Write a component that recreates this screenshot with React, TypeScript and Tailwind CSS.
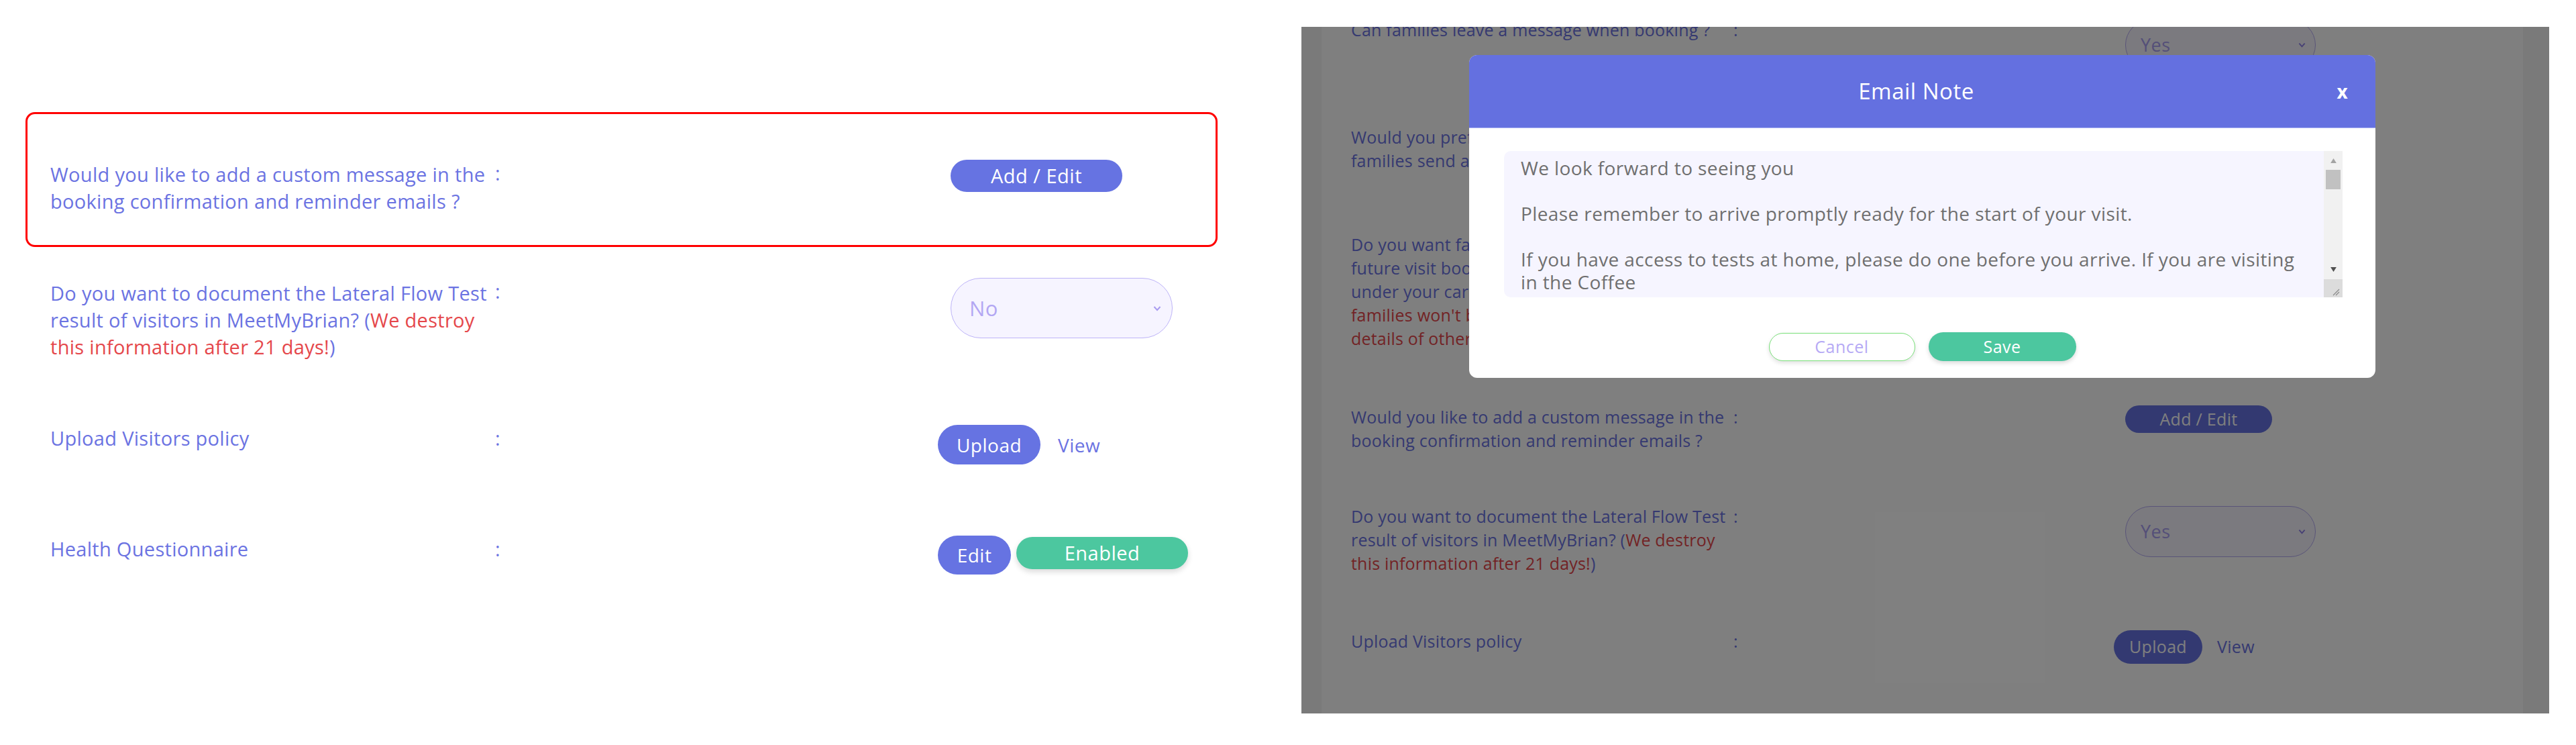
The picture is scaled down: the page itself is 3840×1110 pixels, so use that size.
import type { ReactNode } from "react";

const labelText = "text-[#6b73e2] text-[29px] leading-[40px] tracking-[0.3px]";
const smallText = "text-[#6b73e2] text-[25px] leading-[35px] tracking-[0.2px]";

function Row({
  label,
  control,
  className = "",
}: {
  label: ReactNode;
  control?: ReactNode;
  className?: string;
}) {
  return (
    <div className={`grid grid-cols-[663px_20px_640px_auto] items-start ${className}`}>
      <div className={`${labelText} whitespace-nowrap`}>{label}</div>
      <div className={labelText}>:</div>
      <div />
      <div>{control}</div>
    </div>
  );
}

function SmallRow({
  label,
  control,
  className = "",
}: {
  label: ReactNode;
  control?: ReactNode;
  className?: string;
}) {
  return (
    <div className={`grid grid-cols-[570px_20px_547px_auto] items-start ${className}`}>
      <div className={`${smallText} whitespace-nowrap`}>{label}</div>
      <div className={smallText}>:</div>
      <div />
      <div>{control}</div>
    </div>
  );
}

function Chevron({ className = "" }: { className?: string }) {
  return (
    <svg viewBox="0 0 12 8" className={className} fill="none" stroke="currentColor" strokeWidth="2">
      <path d="M1.5 1.5 6 6.5l4.5-5" />
    </svg>
  );
}

function Select({ value, small = false }: { value: string; small?: boolean }) {
  return small ? (
    <div className="ml-[17px] mt-[2px] flex h-[76px] w-[284px] items-center justify-between rounded-full border-[1.5px] border-[#b4aaf2] bg-[#f6f4ff] pl-[22px] pr-[14px] text-[27px] tracking-[0.5px] text-[#a99ff0]">
      <span>{value}</span>
      <Chevron className="h-[8px] w-[11px] text-[#8c7fe8]" />
    </div>
  ) : (
    <div className="ml-[19px] flex h-[90px] w-[331px] items-center justify-between rounded-full border-[1.5px] border-[#bdb3f8] bg-[#f6f4ff] pl-[27px] pr-[16px] text-[31px] tracking-[0.5px] text-[#b3a7f3]">
      <span>{value}</span>
      <Chevron className="h-[9px] w-[12px] text-[#a99cf0]" />
    </div>
  );
}

function LeftPage() {
  return (
    <div className="w-[1940px] shrink-0 pt-[167px]">
      <div className="ml-[38px] h-[201px] w-[1777px] rounded-[14px] border-[3px] border-[#ff0000] pl-[34px] pt-[68px]">
        <Row
          label={
            <div className="mt-[2px]">
              Would you like to add a custom message in the
              <br />
              booking confirmation and reminder emails ?
            </div>
          }
          control={
            <button className="ml-[19px] h-[48px] w-[256px] rounded-full bg-[#6673e2] text-[29px] tracking-[0.5px] text-white">
              Add / Edit
            </button>
          }
        />
      </div>

      <Row
        className="ml-[75px] mt-[46px]"
        label={
          <div className="mt-[3px]">
            Do you want to document the Lateral Flow Test
            <br />
            result of visitors in MeetMyBrian? (<span className="text-[#e5474b]">We destroy</span>
            <br />
            <span className="text-[#e5474b]">this information after 21 days!</span>)
          </div>
        }
        control={<Select value="No" />}
      />

      <Row
        className="ml-[75px] mt-[96px]"
        label="Upload Visitors policy"
        control={
          <div className="flex items-center gap-[26px]">
            <button className="h-[59px] w-[153px] rounded-full bg-[#6673e2] text-[28px] tracking-[0.5px] text-white">
              Upload
            </button>
            <span className="text-[28px] tracking-[0.5px] text-[#6b73e2]">View</span>
          </div>
        }
      />

      <Row
        className="ml-[75px] mt-[106px]"
        label="Health Questionnaire"
        control={
          <div className="flex items-start gap-[8px]">
            <button className="h-[58px] w-[109px] rounded-full bg-[#6673e2] text-[28px] tracking-[0.5px] text-white">
              Edit
            </button>
            <button className="mt-[2px] h-[48px] w-[256px] rounded-full bg-[#4cc79f] text-[29px] tracking-[0.5px] text-white shadow-[0_4px_8px_rgba(0,0,0,0.15)]">
              Enabled
            </button>
          </div>
        }
      />
    </div>
  );
}

function Scrollbar() {
  return (
    <div className="flex w-[28px] shrink-0 flex-col bg-[#f1f1f1]">
      <div className="flex h-[28px] items-center justify-center">
        <svg viewBox="0 0 10 8" className="h-[7px] w-[9px]">
          <path d="M5 0 10 8H0z" fill="#a3a3a3" />
        </svg>
      </div>
      <div className="mx-[3px] h-[29px] bg-[#c1c1c1]" />
      <div className="flex-1" />
      <div className="flex h-[30px] items-center justify-center">
        <svg viewBox="0 0 10 8" className="h-[7px] w-[9px]">
          <path d="M0 0h10L5 8z" fill="#505050" />
        </svg>
      </div>
      <div className="relative h-[27px] bg-[#dcdcdc]">
        <svg viewBox="0 0 14 14" className="absolute bottom-[2px] right-[4px] h-[14px] w-[14px]">
          <path d="M13 4 4 13M13 8 8 13" stroke="#8a8a8a" strokeWidth="1.2" />
        </svg>
      </div>
    </div>
  );
}

function EmailNoteModal() {
  const lines = [
    "We look forward to seeing you",
    "",
    "Please remember to arrive promptly ready for the start of your visit.",
    "",
    "If you have access to tests at home, please do one before you arrive. If you are visiting",
    "in the Coffee",
    "shop, please make sure to bring your own hand gel. If you would like to take the flowers and",
  ];
  return (
    <div className="absolute left-[250px] top-[42px] h-[481px] w-[1351px] rounded-[12px] bg-white">
      <div className="flex h-[109px] items-center rounded-t-[12px] border-b border-[#a9b1f2] bg-[#6470e0] pl-[40px] pr-[41px]">
        <div className="flex-1 text-center text-[33px] tracking-[0.5px] text-white">Email Note</div>
        <span className="w-[17px] text-center text-[28px] font-bold leading-none text-white">x</span>
      </div>
      <div className="pl-[52px] pt-[34px]">
        <div className="flex h-[218px] w-[1250px] overflow-hidden rounded-l-[10px] bg-[#f6f5ff]">
          <div className="min-w-0 flex-1 overflow-hidden pl-[25px] pt-[8px] text-[28px] leading-[34px] tracking-[0.4px] text-[#6f6f6f]">
            {lines.map((l, i) => (
              <div key={i} className="h-[34px] whitespace-nowrap">
                {l}
              </div>
            ))}
          </div>
          <Scrollbar />
        </div>
      </div>
      <div className="mt-[52px] flex justify-center gap-[20px]">
        <button className="mt-[1px] h-[42px] w-[218px] rounded-full border-[1.5px] border-[#7ae07a] bg-white text-[25px] tracking-[0.5px] text-[#b6aaf5] shadow-[0_3px_6px_rgba(0,0,0,0.12)]">
          Cancel
        </button>
        <button className="h-[43px] w-[220px] rounded-full bg-[#4cc79f] text-[25px] tracking-[0.5px] text-white shadow-[0_3px_6px_rgba(0,0,0,0.15)]">
          Save
        </button>
      </div>
    </div>
  );
}

function RightPage() {
  return (
    <div className="relative mt-[40px] flex h-[1023px] w-[1860px] shrink-0 overflow-hidden bg-[#f4f4f4]">
      <div className="w-[30px] shrink-0" />
      <div className="w-[1791px] shrink-0 bg-white pl-[44px]">
        <SmallRow
          className="mt-[-13px]"
          label="Can families leave a message when booking ?"
          control={<Select value="Yes" small />}
        />
        <SmallRow
          className="mt-[6px]"
          label={
            <div className="mt-[76px]">
              Would you prefer that an admin approves the
              <br />
              families send as visit requests ?
            </div>
          }
        />
        <SmallRow
          className="mt-[90px]"
          label={
            <div>
              Do you want families to be able to see the
              <br />
              future visit bookings made for the resident
              <br />
              under your care? <span className="text-[#e5474b]">(If no,</span>
              <br />
              <span className="text-[#e5474b]">families won&apos;t be able to see the</span>
              <br />
              <span className="text-[#e5474b]">details of other families)</span>
            </div>
          }
        />
        <SmallRow
          className="mt-[82px]"
          label={
            <div>
              Would you like to add a custom message in the
              <br />
              booking confirmation and reminder emails ?
            </div>
          }
          control={
            <button className="ml-[17px] h-[41px] w-[219px] rounded-full bg-[#6673e2] text-[25px] tracking-[0.3px] text-white">
              Add / Edit
            </button>
          }
        />
        <SmallRow
          className="mt-[78px]"
          label={
            <div>
              Do you want to document the Lateral Flow Test
              <br />
              result of visitors in MeetMyBrian? (<span className="text-[#e5474b]">We destroy</span>
              <br />
              <span className="text-[#e5474b]">this information after 21 days!</span>)
            </div>
          }
          control={<Select value="Yes" small />}
        />
        <SmallRow
          className="mt-[81px]"
          label="Upload Visitors policy"
          control={
            <div className="mt-[1px] flex items-center gap-[22px]">
              <button className="h-[50px] w-[132px] rounded-full bg-[#6673e2] text-[25px] tracking-[0.3px] text-white">
                Upload
              </button>
              <span className="text-[25px] tracking-[0.3px] text-[#6b73e2]">View</span>
            </div>
          }
        />
      </div>
      <div className="flex-1" />
      <div className="absolute inset-0 bg-black/50" />
      <EmailNoteModal />
    </div>
  );
}

export default function App() {
  return (
    <div className="flex h-[1110px] w-[3840px] overflow-hidden bg-white font-[family-name:'Open_Sans',sans-serif]">
      <LeftPage />
      <RightPage />
    </div>
  );
}
